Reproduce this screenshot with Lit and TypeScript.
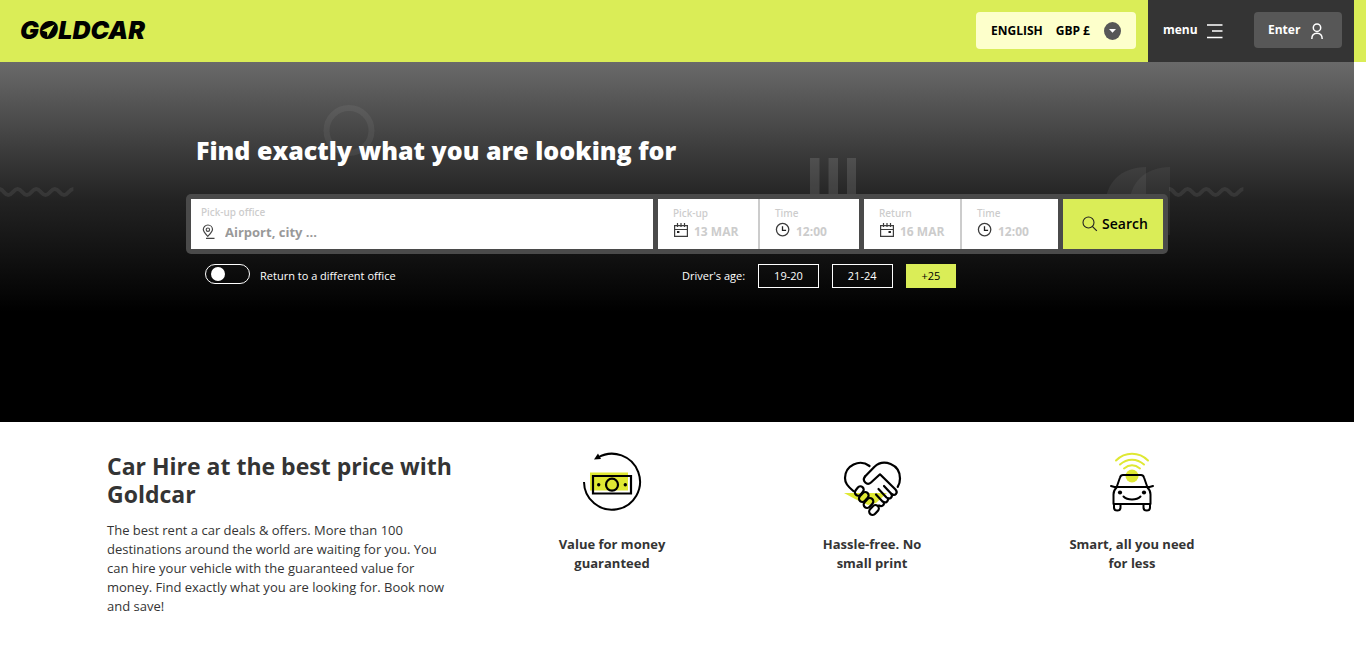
import { LitElement, html, css, svg } from "lit";
import { customElement, property, state } from "lit/decorators.js";

const calendarIcon = (dotX: number) => html`
  <svg class="icon" width="16" height="16" viewBox="0 0 16 16" aria-hidden="true">
    <path d="M1.600 3.600h12.800v10.800H1.600zM1.600 7.500h12.800M4.500 1v4M8 1v4M11.500 1v4" fill="none" stroke="#3c3c3c" stroke-width="1.200" />
    <rect x=${dotX} y="9" width="2.400" height="2" fill="#222" />
  </svg>
`;

const clockIcon = html`
  <svg class="icon" width="16" height="16" viewBox="0 0 16 16" aria-hidden="true">
    <circle cx="7.600" cy="7.600" r="6.200" fill="none" stroke="#3c3c3c" stroke-width="1.300" />
    <path d="M7.500 4.300v4h3.600" fill="none" stroke="#222" stroke-width="1.300" />
  </svg>
`;

@customElement("gc-header")
class GcHeader extends LitElement {
  static styles = css`
    :host { display: block; }
    .bar { display: flex; align-items: stretch; height: 62px; padding: 0 12px 0 20px; background: #daed57; }
    .logo { display: block; margin: 14px auto 0 0; height: 34px; }
    .logo svg { display: block; overflow: visible; }
    .logo text { font: italic 900 25px "Inter", sans-serif; fill: #000; }
    .lang {
      display: flex; align-items: center; align-self: flex-start; box-sizing: border-box; min-width: 160px; height: 37px;
      margin: 12px 12px 0 0; padding: 0 15px; border: 0; border-radius: 4px; background: #fdffcb; color: #000;
      font: 700 12px "Open Sans", sans-serif; white-space: nowrap;
    }
    .lang span { margin-right: 13px; }
    .lang svg { margin-left: auto; }
    .dark { display: flex; align-items: flex-start; justify-content: space-between; width: 179px; padding: 12px 12px 0 15px; background: #343434; }
    .menu, .enter {
      display: flex; align-items: center; height: 36px; border: 0; color: #fff;
      font: 700 12px/16px "Open Sans", sans-serif;
    }
    .menu { gap: 9px; padding: 0; background: none; }
    .enter {
      box-sizing: border-box; min-width: 88px; gap: 9px; padding: 0 15px 0 14px; border-radius: 4px;
      background: #575757; text-decoration: none;
    }
    .menu svg, .enter svg { position: relative; top: 1px; }
  `;

  render() {
    return html`
      <header class="bar">
        <a class="logo" href="#" aria-label="Goldcar">
          <svg width="130" height="34" viewBox="0 0 130 34">
            <text x="0" y="25">GOLDCAR</text>
            <ellipse cx="28.500" cy="16" rx="7" ry="7.500" fill="#000" />
            <path d="M34.500 10.500 22 16.500l5 1.500.500 5z" fill="#daed57" />
          </svg>
        </a>
        <button class="lang" type="button">
          <span>ENGLISH</span><span>GBP £</span>
          <svg width="17" height="18" viewBox="0 0 17 18" aria-hidden="true">
            <ellipse cx="8.500" cy="9" rx="8.500" ry="9" fill="#575757" />
            <path d="M5 7h7l-3.500 3.700z" fill="#fff" />
          </svg>
        </button>
        <div class="dark">
          <button class="menu" type="button">
            <span>menu</span>
            <svg width="16" height="16" viewBox="0 0 16 16" aria-hidden="true">
              <path d="M0 2h15.500M5 8h10.500M0 14.500h15.500" stroke="#fff" stroke-width="1.500" />
            </svg>
          </button>
          <a class="enter" href="#">
            <span>Enter</span>
            <svg width="16" height="18" viewBox="0 0 16 18" aria-hidden="true">
              <circle cx="8" cy="5.700" r="3.700" fill="none" stroke="#fff" stroke-width="1.500" />
              <path d="M2.800 17c0-4 2.200-5.800 5.200-5.800s5.200 1.800 5.200 5.800" fill="none" stroke="#fff" stroke-width="1.500" />
            </svg>
          </a>
        </div>
      </header>
    `;
  }
}

@customElement("gc-search")
class GcSearch extends LitElement {
  static styles = css`
    :host { display: block; font-family: "Open Sans", sans-serif; }
    *, *::before { box-sizing: border-box; }
    .hero {
      position: relative; overflow: hidden; margin-right: 12px; padding: 71px 12px 134px;
      background: linear-gradient(#6a6a6a 0, #3c3c3c 88px, #222 140px, #000 250px);
    }
    .art { position: absolute; top: 0; left: 0; }
    .panel { position: relative; max-width: 982px; margin: 0 auto; }
    .title { margin: 0 0 27px; padding-left: 10px; color: #fff; font: 800 25px/34px "Open Sans", sans-serif; }
    .search { display: flex; gap: 5px; padding: 5px; border-radius: 5px; background: #4a4a4a; }
    .office { flex: 1; padding: 6px 10px 0; background: #fff; }
    .pair { display: flex; background: #fff; }
    .field { width: 101px; height: 50px; padding: 7px 0 0 15px; border-left: 2px solid #ccc; }
    .field:first-child { width: 100px; border-left: 0; }
    .pair.narrow .field { width: 98px; }
    .pair.narrow .field:first-child { width: 96px; }
    .caption { display: block; color: #ccc; font: 500 10px/14px "Noto Sans", sans-serif; }
    .line { display: flex; align-items: center; gap: 5px; }
    .office .line { gap: 8px; }
    .icon { flex: none; display: block; }
    .field .icon { margin-bottom: 4px; }
    .value {
      appearance: none; min-width: 0; width: 100%; height: 24px; padding: 0; border: 0; border-radius: 0; background: none;
      color: #ccc; font: 700 12px/24px "Open Sans", sans-serif; opacity: 1;
    }
    .office .value { height: 26px; font-size: 13px; }
    .office .value::placeholder { color: #999; opacity: 1; }
    .go {
      display: flex; align-items: center; justify-content: center; gap: 4px; width: 100px; padding: 0 0 1px 4px; border: 0;
      background: #daed57; color: #000; font: 600 14px "Open Sans", sans-serif;
    }
    .options { display: flex; align-items: flex-start; padding: 10px 0 0 19px; color: #fff; font-size: 11px; }
    .different { display: flex; gap: 10px; width: 477px; line-height: 24px; }
    .toggle {
      appearance: none; flex: none; width: 45px; height: 20px; margin: 0; padding: 2px 5px; border: 1px solid #fff; border-radius: 10px;
    }
    .toggle::before { content: ""; display: block; width: 14px; height: 14px; border-radius: 50%; background: #fff; }
    .toggle:checked::before { margin-left: auto; }
    .ages { display: flex; align-items: center; gap: 13px; line-height: 22px; }
    .age { position: relative; padding: 0 15px; border: 1px solid #fff; }
    .age.on { border-color: #daed57; background: #daed57; color: #000; }
    .age input { position: absolute; inset: 0; width: 100%; height: 100%; margin: 0; opacity: 0; }
  `;

  @state() private age = "+25";

  private field(id: string, label: string, value: string, icon: unknown) {
    return html`
      <div class="field">
        <label class="caption" for=${id}>${label}</label>
        <div class="line">
          ${icon}
          ${label === "Time"
            ? html`<select class="value" id=${id}><option>${value}</option></select>`
            : html`<input class="value" id=${id} type="text" readonly .value=${value} />`}
        </div>
      </div>
    `;
  }

  render() {
    const wave = (x: number) => svg`
      <path d="M${x} 127c5 0 5 6 9.300 6s5-6 9.300-6 5 6 9.300 6 5-6 9.300-6 5 6 9.300 6 5-6 9.300-6 5 6 9.300 6 5-6 9.300-6"
        fill="none" stroke="#fff" stroke-opacity=".08" stroke-width="4" />`;
    return html`
      <section class="hero">
        <svg class="art" width="1354" height="360" viewBox="0 0 1354 360" aria-hidden="true">
          <circle cx="349" cy="68.500" r="22.500" fill="none" stroke="#fff" stroke-opacity=".06" stroke-width="6" />
          ${wave(-1)} ${wave(1169)}
          <path d="M810 96h9.500v50H810zM828.500 96h9.500v50h-9.500zM847 96h9v50h-9z" fill="#fff" fill-opacity=".12" />
          <path d="M1146 105v68h-41v-28c0-24 16-40 41-40z" fill="#fff" fill-opacity=".06" />
          <path d="M1170 105v68h-41v-28c0-24 16-40 41-40z" fill="#fff" fill-opacity=".05" />
        </svg>
        <div class="panel">
          <h1 class="title">Find exactly what you are looking for</h1>
          <form class="search" @submit=${(e: Event) => e.preventDefault()}>
            <div class="office">
              <label class="caption" for="office">Pick-up office</label>
              <div class="line">
                <svg class="icon" width="16" height="16" viewBox="0 0 16 16" aria-hidden="true">
                  <path d="M6.800 12.300C4 9.500 2.300 7.700 2.300 5.600a4.600 4.600 0 0 1 9.200 0c0 2.100-1.900 3.900-4.700 6.700zM5 14.300h8.500" fill="none" stroke="#444" stroke-width="1.200" />
                  <circle cx="6.900" cy="5.700" r="1.700" fill="none" stroke="#444" stroke-width="1.100" />
                </svg>
                <input class="value" id="office" type="text" placeholder="Airport, city ..." />
              </div>
            </div>
            <div class="pair">
              ${this.field("from", "Pick-up", "13 MAR", calendarIcon(4))}
              ${this.field("from-time", "Time", "12:00", clockIcon)}
            </div>
            <div class="pair narrow">
              ${this.field("to", "Return", "16 MAR", calendarIcon(9.5))}
              ${this.field("to-time", "Time", "12:00", clockIcon)}
            </div>
            <button class="go" type="submit">
              <svg width="16" height="16" viewBox="0 0 16 16" aria-hidden="true">
                <circle cx="6.500" cy="6.500" r="5.500" fill="none" stroke="#222" stroke-width="1.100" />
                <path d="M10.300 10.300l4.500 4.500" stroke="#222" stroke-width="1.200" />
              </svg>
              Search
            </button>
          </form>
          <div class="options">
            <label class="different"><input class="toggle" type="checkbox" />Return to a different office</label>
            <div class="ages" role="radiogroup" aria-label="Driver's age">
              <span>Driver's age:</span>
              ${["19-20", "21-24", "+25"].map((a) => html`
                <label class="age ${a === this.age ? "on" : ""}">
                  <input type="radio" name="age" .checked=${a === this.age} @change=${() => (this.age = a)} />${a}
                </label>
              `)}
            </div>
          </div>
        </div>
      </section>
    `;
  }
}

@customElement("gc-benefit")
class GcBenefit extends LitElement {
  static styles = css`
    :host { display: block; flex: 1; }
    .benefit { padding: 30px 60px 0; color: #343434; text-align: center; }
    .drawing { display: block; margin: 0 auto 23px; overflow: visible; }
    .name { max-width: 130px; margin: 0 auto; font: 700 13px/19px "Open Sans", sans-serif; }
  `;

  @property() kind = "";
  @property() label = "";

  private drawing() {
    if (this.kind === "money") {
      return svg`
        <path d="M8 20.500h38v18H8z" fill="#dfe833" />
        <path d="M2 30a28 28 0 1 0 14-24.500" fill="none" stroke="#000" stroke-width="2" />
        <path d="M12 7.500l4-6 3 5.500z" />
        <path d="M11 24h38v17.500H11z" fill="none" stroke="#000" stroke-width="2.200" />
        <circle cx="30" cy="32.700" r="6" fill="none" stroke="#000" stroke-width="2.200" />
        <circle cx="16.700" cy="32.700" r="1.700" /><circle cx="43.300" cy="32.700" r="1.700" />`;
    }
    if (this.kind === "hands") {
      return svg`
        <path d="M2 41h43L34 51l-8 2-13-6z" fill="#dfe833" />
        <g fill="none" stroke="#000" stroke-width="2.200" stroke-linecap="round" stroke-linejoin="round">
          <path d="M11.300 39C5.500 34 3 31 3 26a15.300 15.300 0 0 1 24.500-12" />
          <path d="M23 24.500l9.500-9.800C41.500 6.500 58 12 58 26.500c0 3.500-.8 6-2.300 8.300" />
          <path d="M23 24.500c-3.300 4.500 2 9.500 6 6l9-8.200 15.500 15.200c3 3.500-.5 7-4 4.500l-7.500-8" />
          <path d="M49.500 42c1.500 3.500-2 6-5 3.500L36.500 37M46 46c.5 4-2.500 5.500-5.500 3.500L34 42.500M42 50c.5 3.500-2.500 5-5 3.500" />
          <rect x="-5" y="-3.300" width="10" height="6.600" rx="3.300" transform="translate(17.300 39) rotate(-50)" />
          <rect x="-5.500" y="-3.400" width="11" height="6.800" rx="3.400" transform="translate(21.800 45) rotate(-48)" />
          <rect x="-5.500" y="-3.400" width="11" height="6.800" rx="3.400" transform="translate(26.500 51) rotate(-48)" />
          <rect x="-5.500" y="-3.400" width="11" height="6.800" rx="3.400" transform="translate(32 58) rotate(-48)" />
        </g>`;
    }
    return svg`
      <circle cx="30" cy="24" r="6.500" fill="#dfe833" />
      <path d="M14 8.500c9-9 23-9 32 0M18 12.500c7-6.500 17-6.500 24 0M22 16.500c5-4 11-4 16 0" fill="none" stroke="#dfe833" stroke-width="2" stroke-linecap="round" />
      <g fill="none" stroke="#000" stroke-width="2" stroke-linejoin="round" stroke-linecap="round">
        <path d="M14.500 35.500l3.500-10c.6-2 1.500-2.500 3-2.500h18c1.500 0 2.400.5 3 2.500l3.500 10M9 34l3.500 1h35l3.500-1" />
        <path d="M14.500 35.500c-2 2-3 4-3 7V52h37v-9.500c0-3-1-5-3-7" />
        <path d="M12 52v3.500c0 4 6.500 4 6.500 0V52M41.500 52v3.500c0 4 6.500 4 6.500 0V52" />
        <path d="M21.500 44.500c4 4 13 4 17 0" />
      </g>
      <circle cx="18" cy="40.500" r="2.100" /><circle cx="42" cy="40.500" r="2.100" />`;
  }

  render() {
    return html`
      <article class="benefit">
        <svg class="drawing" width="60" height="60" viewBox="0 0 60 60" aria-hidden="true">${this.drawing()}</svg>
        <h3 class="name">${this.label}</h3>
      </article>
    `;
  }
}

@customElement("app-root")
class AppRoot extends LitElement {
  static styles = css`
    :host { display: block; background: #fff; }
    .about { display: flex; box-sizing: border-box; max-width: 1170px; margin: 0 auto; }
    .wrap { margin-right: 12px; }
    .intro { box-sizing: border-box; width: 33.333%; padding: 30px 15px 0; color: #343434; }
    .heading { max-width: 350px; margin: 0 0 13px; font: 700 23px/28px "Open Sans", sans-serif; }
    .text { max-width: 345px; margin: 0; font: 400 13px/19px "Open Sans", sans-serif; }
    .benefits { display: flex; width: 66.667%; }
  `;

  render() {
    return html`
      <gc-header></gc-header>
      <main>
        <gc-search></gc-search>
        <div class="wrap">
          <section class="about">
            <div class="intro">
              <h2 class="heading">Car Hire at the best price with Goldcar</h2>
              <p class="text">
                The best rent a car deals &amp; offers. More than 100 destinations around the world are waiting for you.
                You can hire your vehicle with the guaranteed value for money. Find exactly what you are looking for.
                Book now and save!
              </p>
            </div>
            <div class="benefits">
              <gc-benefit kind="money" label="Value for money guaranteed"></gc-benefit>
              <gc-benefit kind="hands" label="Hassle-free. No small print"></gc-benefit>
              <gc-benefit kind="car" label="Smart, all you need for less"></gc-benefit>
            </div>
          </section>
        </div>
      </main>
    `;
  }
}
